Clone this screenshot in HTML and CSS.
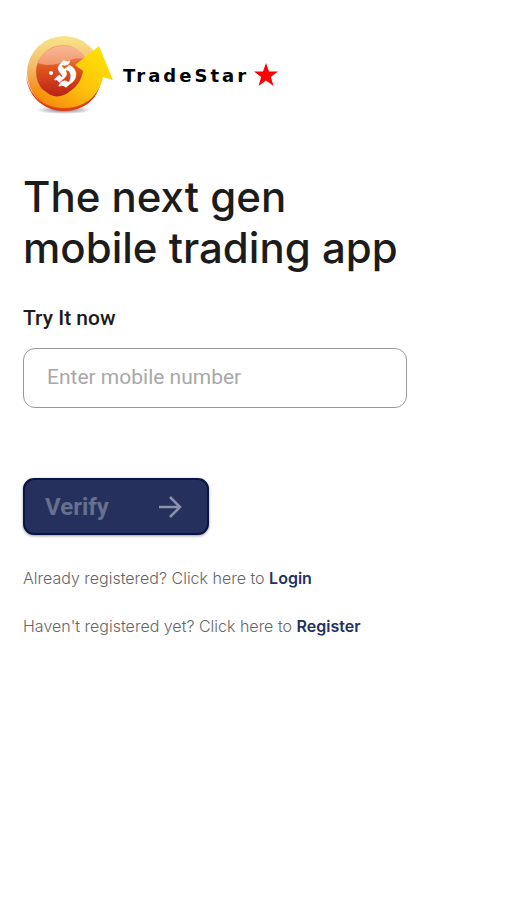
FILE: index.html
```html
<!DOCTYPE html>
<html lang="en">
<head>
    <meta charset="utf-8">
    <title>TradeStar</title>
    <meta name="viewport" content="width=device-width, initial-scale=1.0">
    <link rel="stylesheet" href="styles.css">
</head>
<body>
    <header class="brand">
        <svg class="brand-logo" viewBox="0 0 90 84" aria-hidden="true">
            <defs>
                <linearGradient id="ring" x1="0" y1="0" x2="0" y2="1">
                    <stop offset="0" stop-color="#f8e58a"/>
                    <stop offset="0.4" stop-color="#f3bd6c"/>
                    <stop offset="0.75" stop-color="#f58a1c"/>
                    <stop offset="1" stop-color="#e84a10"/>
                </linearGradient>
                <linearGradient id="core" x1="0" y1="0" x2="0" y2="1">
                    <stop offset="0" stop-color="#f7a57c"/>
                    <stop offset="0.4" stop-color="#e25a20"/>
                    <stop offset="1" stop-color="#b51c12"/>
                </linearGradient>
                <linearGradient id="arrow" x1="1" y1="0" x2="0" y2="1">
                    <stop offset="0" stop-color="#ffe800"/>
                    <stop offset="0.5" stop-color="#ffc40c"/>
                    <stop offset="1" stop-color="#f47a10"/>
                </linearGradient>
                <radialGradient id="shade">
                    <stop offset="0" stop-color="#555" stop-opacity="0.8"/>
                    <stop offset="1" stop-color="#555" stop-opacity="0"/>
                </radialGradient>
            </defs>
            <ellipse cx="41" cy="77" rx="28" ry="4" fill="url(#shade)"/>
            <circle cx="41" cy="40" r="37" fill="url(#ring)"/>
            <path d="M3 41C5 62 21 76 41 76C59 76 73 65 78 48C75 67 60 78 41 78C20 78 4 63 3 41Z" fill="#df3b12"/>
            <circle cx="40" cy="39" r="27" fill="url(#core)"/>
            <path d="M15 30C21 8 59 8 65 27C49 20 35 38 15 30Z" fill="#fbd0b2" opacity="0.5"/>
            <path d="M8 52C14 57 18 56 22 58C29 65 38 65 46 59C56 53 59 44 60 38L52 32L76 13L90 47L80 44C76 64 60 75 41 75C24 75 12 66 8 52Z" fill="url(#arrow)"/>
            <text class="logo-mark" x="42" y="49" text-anchor="middle">𝕳</text>
            <circle cx="28" cy="40" r="2" fill="#fff"/>
        </svg>
        <span class="brand-name">TradeStar</span>
        <svg class="brand-star" viewBox="0 0 24 24" aria-hidden="true">
            <path d="M12 0L15 8.6H24L16.8 14L19.5 23L12 17.6L4.5 23L7.2 14L0 8.6H9Z" fill="#f00"/>
        </svg>
    </header>

    <main>
        <h1>The next gen<br>mobile trading app</h1>

        <form class="verify-form">
            <label for="mobile">Try It now</label>
            <input type="tel" id="mobile" name="mobile" placeholder="Enter mobile number">
            <button type="submit">
                Verify
                <svg class="arrow" viewBox="0 0 24 24" aria-hidden="true">
                    <path d="M1 12H22M12 2L22 12L12 22"/>
                </svg>
            </button>
        </form>

        <p class="hint">Already registered? Click here to <a href="#login">Login</a></p>
        <p class="hint">Haven't registered yet? Click here to <a href="#register">Register</a></p>
    </main>
</body>
</html>
```

FILE: styles.css
```css
* {
    box-sizing: border-box;
}
body {
    margin: 0;
    padding: 33px 23px;
    background-color: #fff;
    color: #1c1c1c;
    font-family: Roboto, sans-serif;
}
.brand {
    display: flex;
    align-items: center;
}
.brand-logo {
    width: 90px;
    height: 84px;
}
.logo-mark {
    font-family: "DejaVu Sans", sans-serif;
    font-size: 32px;
    font-weight: bold;
    fill: #fff;
}
.brand-name {
    margin-left: 10px;
    font-family: "DejaVu Sans", sans-serif;
    font-size: 18px;
    font-weight: bold;
    letter-spacing: 3px;
    color: #000;
}
.brand-star {
    width: 24px;
    height: 24px;
    margin-left: 5px;
}
main {
    max-width: 384px;
}
h1 {
    margin: 54px 0 31px;
    font-family: Inter, sans-serif;
    font-size: 42px;
    font-weight: 500;
    line-height: 51px;
    white-space: nowrap;
}
.verify-form {
    display: flex;
    flex-direction: column;
    align-items: flex-start;
}
label {
    font-size: 21px;
    font-weight: 500;
    line-height: 28px;
}
input {
    width: 100%;
    height: 60px;
    margin-top: 16px;
    padding: 0 23px 3px;
    border: 1px solid #999;
    border-radius: 12px;
    font-family: inherit;
    font-size: 21px;
    color: #1c1c1c;
}
input::placeholder {
    color: #a8a8a8;
}
button {
    display: flex;
    justify-content: space-between;
    align-items: center;
    width: 186px;
    height: 57px;
    margin: 70px 0 31px;
    padding: 0 25px 0 20px;
    border: 2px solid #0b1446;
    border-radius: 11px;
    background-color: #25315c;
    box-shadow: 0 1px 3px rgba(0, 0, 0, 0.4);
    color: #66708f;
    font-family: inherit;
    font-size: 24px;
    font-weight: bold;
    cursor: pointer;
}
.arrow {
    width: 24px;
    height: 24px;
    fill: none;
    stroke: #8a92ab;
    stroke-width: 2.5;
}
.hint {
    margin: 0 0 24px;
    font-family: Inter, sans-serif;
    font-size: 16px;
    font-weight: 300;
    line-height: 24px;
    color: #666;
}
.hint a {
    color: #25315c;
    font-weight: 600;
    text-decoration: none;
}
```
